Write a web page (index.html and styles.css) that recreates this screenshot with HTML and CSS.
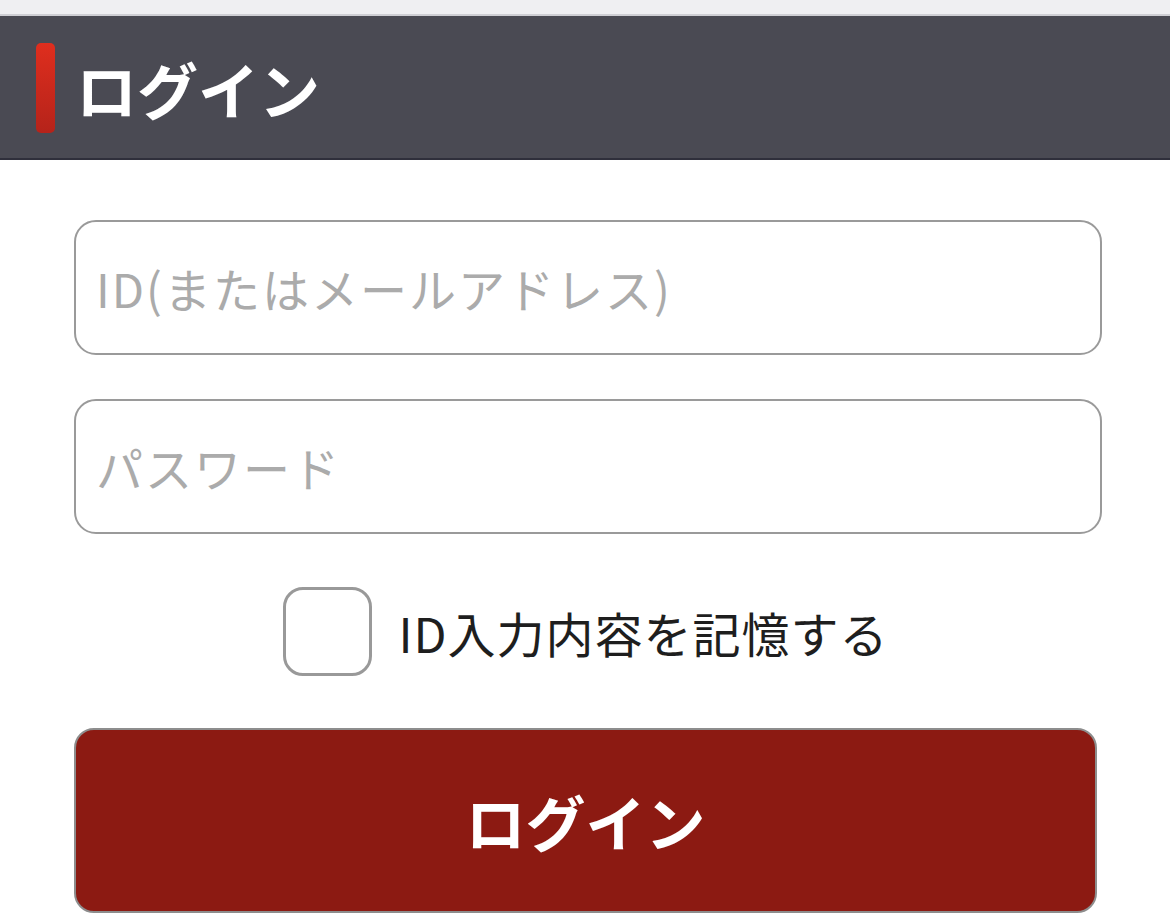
FILE: index.html
```html
<!DOCTYPE html>
<html lang="ja">
<head>
<meta charset="utf-8">
<title>ログイン</title>
<link rel="stylesheet" href="styles.css">
</head>
<body>
<div class="topbar"></div>
<header class="header">
  <span class="accent"></span>
  <h1 class="title">ログイン</h1>
</header>
<form class="form">
  <input class="field" type="text" placeholder="ID(またはメールアドレス)">
  <input class="field" type="password" placeholder="パスワード">
  <label class="remember">
    <span class="box"></span>
    <span class="remember-text">ID入力内容を記憶する</span>
  </label>
  <button class="submit" type="button">ログイン</button>
</form>
</body>
</html>
```
FILE: styles.css
```css
html, body {
  margin: 0;
  padding: 0;
  background: #ffffff;
  font-family: "Noto Sans CJK JP", "Noto Sans", sans-serif;
}
.topbar {
  height: 14px;
  background: #efeff2;
  border-bottom: 2px solid #cfcfd4;
}
.header {
  height: 142px;
  background: #4a4a53;
  border-bottom: 2px solid #2f2f3b;
  display: flex;
  align-items: center;
  padding-left: 36px;
}
.accent {
  width: 19px;
  height: 90px;
  border-radius: 5px;
  background: linear-gradient(#df2e1e, #b5231a);
  margin-top: 2px;
}
.title {
  margin: 0 0 0 21px;
  color: #ffffff;
  font-size: 61px;
  font-weight: 700;
  line-height: 1;
  margin-top: 2px;
}
.form {
  padding: 60px 68px 0 74px;
  display: flex;
  flex-direction: column;
}
.field {
  box-sizing: border-box;
  height: 135px;
  border: 2px solid #9a9a9a;
  border-radius: 22px;
  padding: 0 20px;
  font-family: "Noto Sans CJK JP", "Noto Sans", sans-serif;
  font-size: 47px;
  letter-spacing: 2px;
  color: #333;
  outline: none;
  margin: 0 0 44px 0;
}
.field::placeholder {
  color: #ababab;
}
.remember {
  display: flex;
  align-items: center;
  justify-content: center;
  margin: 9px 0 0 -4px;
}
.box {
  box-sizing: border-box;
  width: 89px;
  height: 89px;
  border: 3px solid #999;
  border-radius: 20px;
}
.remember-text {
  margin-left: 26px;
  font-size: 48px;
  letter-spacing: 1px;
  color: #1e1e1e;
}
.submit {
  box-sizing: border-box;
  margin: 52px 5px 0 0;
  height: 185px;
  background: #8c1a12;
  border: 2px solid #8d8d8d;
  border-radius: 20px;
  color: #ffffff;
  font-family: "Noto Sans CJK JP", "Noto Sans", sans-serif;
  font-size: 60px;
  font-weight: 700;
}
```
